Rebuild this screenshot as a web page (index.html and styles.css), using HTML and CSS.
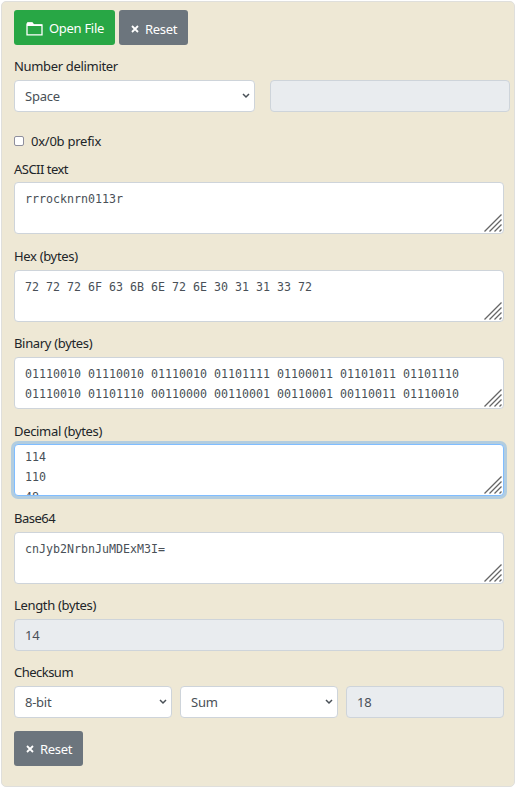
FILE: index.html
```
<!DOCTYPE html>
<html lang="en">
<head>
<meta charset="utf-8">
<title>Text converter</title>
<link rel="stylesheet" href="styles.css">
</head>
<body>
<svg class="defs" aria-hidden="true">
  <symbol id="grip" viewBox="0 0 18 18"><path d="M.5 17.5l17-17M5.5 17.5l12-12M10.5 17.5l7-7M15.5 17.5l2-2"/></symbol>
  <symbol id="chevron" viewBox="0 0 8 6"><path d="M1 1l3 3 3-3"/></symbol>
  <symbol id="cross" viewBox="0 0 8 8"><path d="M1 1l6 6M7 1L1 7"/></symbol>
</svg>
<form class="panel">
  <div class="actions">
    <button type="button" class="btn open"><svg class="folder" viewBox="0 0 17 14"><path class="outline" d="M1 2v10.8h15V3H7.5L6 1H2z"/><path class="fill" d="M1 .5h5.5L8 2.5h8V4H1z"/></svg><span>Open File</span></button>
    <button type="button" class="btn reset"><svg class="cross"><use href="#cross"/></svg><span>Reset</span></button>
  </div>
  <div class="group delimiter">
    <label class="label">Number delimiter</label>
    <div class="halves">
      <div class="control">Space<svg class="chevron"><use href="#chevron"/></svg></div>
      <div class="control disabled"></div>
    </div>
  </div>
  <label class="check"><input type="checkbox"><span>0x/0b prefix</span></label>
  <div class="group">
    <label class="label tight">ASCII text</label>
    <div class="area">rrrocknrn0113r<svg class="grip"><use href="#grip"/></svg></div>
  </div>
  <div class="group">
    <label class="label">Hex (bytes)</label>
    <div class="area">72 72 72 6F 63 6B 6E 72 6E 30 31 31 33 72<svg class="grip"><use href="#grip"/></svg></div>
  </div>
  <div class="group">
    <label class="label">Binary (bytes)</label>
    <div class="area">01110010 01110010 01110010 01101111 01100011 01101011 01101110 01110010 01101110 00110000 00110001 00110001 00110011 01110010<svg class="grip"><use href="#grip"/></svg></div>
  </div>
  <div class="group">
    <label class="label">Decimal (bytes)</label>
    <div class="area focused">114<br>110<br>48<svg class="grip"><use href="#grip"/></svg></div>
  </div>
  <div class="group">
    <label class="label tight">Base64</label>
    <div class="area">cnJyb2NrbnJuMDExM3I=<svg class="grip"><use href="#grip"/></svg></div>
  </div>
  <div class="group short">
    <label class="label">Length (bytes)</label>
    <div class="control disabled">14</div>
  </div>
  <div class="group short">
    <label class="label tight">Checksum</label>
    <div class="thirds">
      <div class="control">8-bit<svg class="chevron"><use href="#chevron"/></svg></div>
      <div class="control">Sum<svg class="chevron"><use href="#chevron"/></svg></div>
      <div class="control disabled">18</div>
    </div>
  </div>
  <button type="button" class="btn reset last"><svg class="cross"><use href="#cross"/></svg><span>Reset</span></button>
</form>
</body>
</html>
```
FILE: styles.css
```
* { box-sizing: border-box; }
body {
  margin: 0;
  height: 787px;
  overflow: hidden;
  background: #fff;
  color: #212529;
  font: 13px/20px "Noto Sans", sans-serif;
}
.defs { position: absolute; width: 0; height: 0; }
.panel {
  width: 514px;
  height: 786px;
  margin: 1px 0 0 1px;
  padding: 8px 10px 0 12px;
  border: 1px solid #dfdfdc;
  border-radius: 5px;
  background: #eee8d5;
}
.actions { display: flex; gap: 4px; margin-bottom: 11px; }
.btn {
  display: flex;
  align-items: center;
  height: 35px;
  padding: 0 12px;
  border: 0;
  border-radius: 3px;
  color: #fff;
  font: inherit;
  white-space: nowrap;
}
.open { width: 101px; background: #28a745; gap: 6px; letter-spacing: -0.3px; }
.reset { width: 69px; background: #6c757d; gap: 6px; padding-top: 2px; letter-spacing: -0.3px; }
.last { margin-top: 1.4px; }
.folder { width: 17px; height: 14px; margin-top: 3px; flex: none; }
.folder .outline { fill: none; stroke: #fff; stroke-width: 1.3; }
.folder .fill { fill: #fff; }
.cross { width: 8px; height: 8px; flex: none; fill: none; stroke: #fff; stroke-width: 1.8; }
.group { width: 490px; height: 87.35px; }
.label { display: block; height: 20px; margin-bottom: 3.9px; letter-spacing: -0.33px; white-space: nowrap; }
.tight { letter-spacing: -0.52px; }
.delimiter { height: 75px; }
.delimiter .label { margin-bottom: 4px; }
.short { height: 67.15px; }
.control {
  display: flex;
  align-items: center;
  justify-content: space-between;
  height: 32px;
  padding: 0 4px 0 10px;
  border: 1px solid #ced4da;
  border-radius: 4px;
  background: #fff;
  color: #495057;
  letter-spacing: -0.25px;
}
.disabled { background: #e9ecef; }
.chevron { width: 8px; height: 6px; fill: none; stroke: #495057; stroke-width: 1.5; }
.halves { display: grid; grid-template-columns: 241px 240px; gap: 15px; }
.thirds { display: grid; grid-template-columns: repeat(3, 158px); gap: 8px; }
.check { display: flex; align-items: center; height: 19px; margin-bottom: 8.5px; letter-spacing: -0.25px; }
.check input { width: 10px; height: 10px; margin: 0 7px 0 0; border: 1px solid #8f8f9d; border-radius: 2px; background: #fff; appearance: none; }
.area {
  position: relative;
  height: 52px;
  padding: 6px 10px;
  overflow: hidden;
  border: 1px solid #ced4da;
  border-radius: 4px;
  background: #fff;
  color: #495057;
  font: 11.63px/20px "DejaVu Sans Mono", monospace;
}
.focused { padding-top: 2px; border-color: #80bdff; box-shadow: 0 0 0 3px #b2cde0; }
.grip { position: absolute; right: 1px; bottom: 1px; width: 18px; height: 18px; fill: none; stroke: #666; stroke-width: 1.3; }
```
